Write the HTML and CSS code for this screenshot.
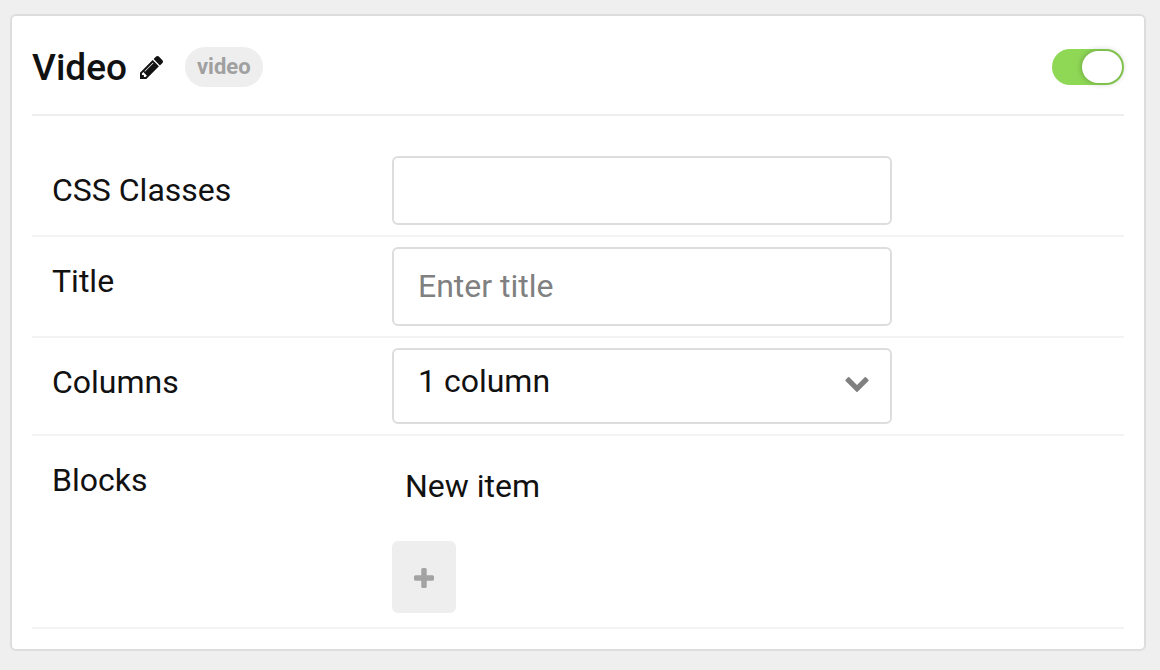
FILE: index.html
```html
<!DOCTYPE html>
<html lang="en">
<head>
<meta charset="utf-8">
<meta name="viewport" content="width=device-width, initial-scale=1">
<title>Video</title>
<link rel="stylesheet" href="styles.css">
</head>
<body>
<main class="card">
  <header class="card-header">
    <h1 class="card-title">Video</h1>
    <button class="edit-button" type="button" aria-label="Edit title">
      <svg class="edit-icon" viewBox="128 149 1515 1515" aria-hidden="true"><path d="M491 1536l91-91-235-235-91 91v107h128v128h107zm523-928q0-22-22-22-10 0-17 7l-542 542q-7 7-7 17 0 22 22 22 10 0 17-7l542-542q7-7 7-17zm-54-192l416 416-832 832h-416v-416zm683 96q0 53-37 90l-166 166-416-416 166-165q36-38 90-38 53 0 91 38l235 234q37 39 37 91z"/></svg>
    </button>
    <span class="badge">video</span>
    <input class="switch" type="checkbox" role="switch" aria-label="Enabled" checked>
  </header>
  <form class="fields">
    <div class="row">
      <label class="label" for="css-classes">CSS Classes</label>
      <input class="control" id="css-classes" type="text">
    </div>
    <div class="row">
      <label class="label" for="title">Title</label>
      <input class="control control-large" id="title" type="text" placeholder="Enter title">
    </div>
    <div class="row">
      <label class="label" for="columns">Columns</label>
      <div class="select-wrap">
        <select class="control control-select" id="columns">
          <option>1 column</option>
          <option>2 columns</option>
          <option>3 columns</option>
        </select>
        <svg class="select-arrow" viewBox="90 533 1612 1035" aria-hidden="true"><path d="M1683 808l-742 741q-19 19-45 19t-45-19l-742-741q-19-19-19-45.500t19-45.500l166-165q19-19 45-19t45 19l531 531 531-531q19-19 45-19t45 19l166 165q19 19 19 45.500t-19 45.500z"/></svg>
      </div>
    </div>
    <div class="row">
      <span class="label">Blocks</span>
      <div class="blocks">
        <div class="block-item">New item</div>
        <button class="add-button" type="button" aria-label="Add item">
          <svg class="add-icon" viewBox="192 128 1408 1408" aria-hidden="true"><path d="M1600 736v192q0 40-28 68t-68 28h-416v416q0 40-28 68t-68 28h-192q-40 0-68-28t-28-68v-416h-416q-40 0-68-28t-28-68v-192q0-40 28-68t68-28h416v-416q0-40 28-68t68-28h192q40 0 68 28t28 68v416h416q40 0 68 28t28 68z"/></svg>
        </button>
      </div>
    </div>
  </form>
</main>
</body>
</html>
```
FILE: styles.css
```css
* {
  box-sizing: border-box;
}

body {
  margin: 0;
  padding: 14px 14px 19px 10px;
  background: #efefef;
  color: #111;
  font-family: Roboto, "Liberation Sans", sans-serif;
  font-size: 32px;
  line-height: 40px;
}

.card {
  padding: 0 20px 20px;
  background: #fff;
  border: 2px solid #ddd;
  border-radius: 6px;
}

.card-header {
  display: flex;
  align-items: center;
  padding: 30px 0 26px;
  border-bottom: 2px solid #eee;
}

.card-title {
  margin: 0;
  padding-top: 2px;
  font-size: 37px;
  font-weight: 500;
  line-height: 40px;
}

.edit-button {
  display: flex;
  margin: 0 22px 0 13px;
  padding: 0;
  border: 0;
  background: none;
  cursor: pointer;
}

.edit-icon {
  width: 23px;
  height: 23px;
  fill: #111;
}

.badge {
  padding: 0 12px;
  border-radius: 20px;
  background: #eee;
  color: #a0a0a0;
  font-size: 22px;
  font-weight: 700;
}

.switch {
  appearance: none;
  display: flex;
  width: 72px;
  height: 36px;
  margin: 0 0 0 auto;
  padding: 2px;
  border-radius: 18px;
  background: #ccc;
  cursor: pointer;
}

.switch::before {
  content: "";
  width: 40px;
  height: 32px;
  border-radius: 16px;
  background: #fff;
  box-shadow: 0 0 6px rgba(0, 0, 0, 0.3);
}

.switch:checked {
  justify-content: flex-end;
  background: #8fd856;
}

.fields {
  margin: 0;
  padding-top: 30px;
}

.row {
  display: grid;
  grid-template-columns: 340px minmax(0, 500px);
  align-items: start;
  padding: 10px 20px;
  border-bottom: 2px solid #f3f3f3;
}

.label {
  padding-top: 14px;
}

.control {
  width: 100%;
  height: 69px;
  padding: 0 24px 2px;
  border: 2px solid #ddd;
  border-radius: 6px;
  background: #fff;
  color: #111;
  font: inherit;
}

.control::placeholder {
  color: #808080;
  opacity: 1;
}

.control-large {
  height: 79px;
}

.select-wrap {
  display: flex;
  position: relative;
}

.control-select {
  appearance: none;
  height: 76px;
  padding-bottom: 10px;
}

.select-arrow {
  position: absolute;
  top: 29px;
  right: 23px;
  width: 24px;
  height: 15px;
  fill: #808080;
  pointer-events: none;
}

.blocks {
  display: flex;
  flex-direction: column;
  align-items: flex-start;
  gap: 35px;
  padding: 20px 0 4px;
}

.block-item {
  padding: 0 13px;
}

.add-button {
  display: flex;
  align-items: center;
  justify-content: center;
  width: 64px;
  height: 72px;
  padding: 2px 0 0;
  border: 0;
  border-radius: 6px;
  background: #eee;
  cursor: pointer;
}

.add-icon {
  width: 20px;
  height: 20px;
  fill: #a3a3a3;
}
```
